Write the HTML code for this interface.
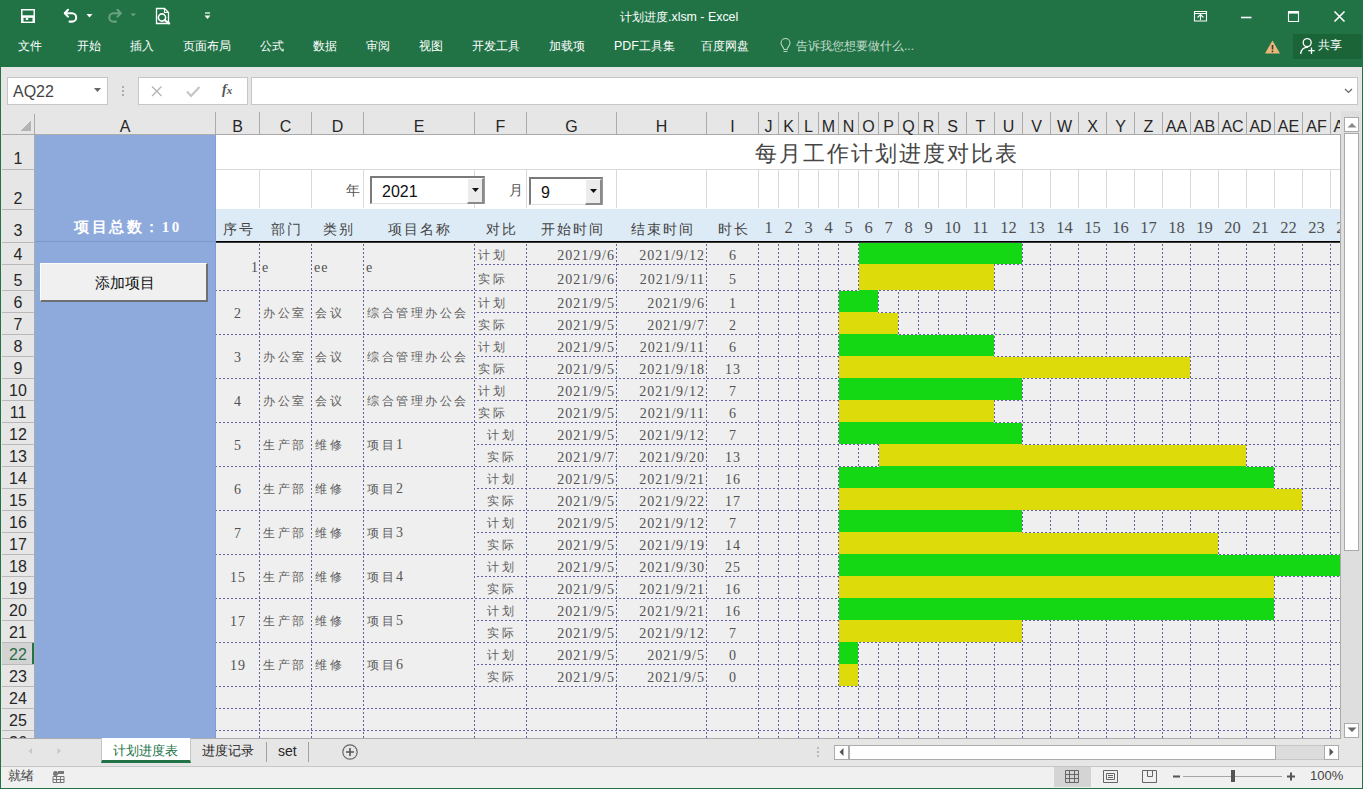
<!DOCTYPE html><html><head><meta charset="utf-8"><title>Excel</title><style>*{margin:0;padding:0;box-sizing:border-box}html,body{width:1363px;height:789px;overflow:hidden}body{position:relative;background:#e6e6e6;font-family:'Liberation Sans', sans-serif}.a{position:absolute;white-space:nowrap}.rt{color:#fff;font-size:12.4px;top:38px;line-height:16px}.ch{position:absolute;top:114px;height:20px;line-height:20px;text-align:center;font-size:16px;color:#262626;padding-top:3px}.rh{position:absolute;left:2px;width:32px;text-align:center;font-size:16px;color:#262626;line-height:18px}.t{position:absolute;white-space:nowrap;font-family:'Liberation Serif', serif;font-size:11.5px;color:#5e5e5e;line-height:16px;letter-spacing:2.5px}.hd{position:absolute;white-space:nowrap;font-family:'Liberation Serif', serif;font-size:14px;color:#444;line-height:18px;text-align:center}svg{position:absolute;left:0;top:0}.n{font-size:14px;letter-spacing:1px;color:#515151}.dg{font-size:16.5px;letter-spacing:0;color:#505050}</style></head><body><div class="a" style="left:0;top:0;width:1363px;height:67px;background:#217346"></div><svg width="1363" height="67" viewBox="0 0 1363 67"><path d="M21 9h14v14h-14z" fill="#fff"/><path d="M22.5 10.5h11v4.8h-11z" fill="#217346"/><path d="M23.5 17.8h9v3.8h-9z" fill="#217346"/><path d="M25.8 17.8h2.4v2.2h-2.4z" fill="#fff"/><path d="M68 9.8 L64.8 13.2 L68 16.6" fill="none" stroke="#fff" stroke-width="2.1" stroke-linecap="round" stroke-linejoin="round"/><path d="M65 13.2 H72 a4.2 4.2 0 0 1 0 8.4 H69.5" fill="none" stroke="#fff" stroke-width="2.1" stroke-linecap="round"/><path d="M86.5 14h6l-3 3.5z" fill="#fff"/><g opacity="0.33"><path d="M117.5 9.8 L120.7 13.2 L117.5 16.6" fill="none" stroke="#fff" stroke-width="2.1" stroke-linecap="round" stroke-linejoin="round"/><path d="M120.5 13.2 H113.5 a4.2 4.2 0 0 0 0 8.4 H116" fill="none" stroke="#fff" stroke-width="2.1" stroke-linecap="round"/><path d="M130.5 13.5h5.5l-2.75 3z" fill="#fff"/></g><path d="M156.5 8.5h8l4 4v11h-12z" fill="none" stroke="#fff" stroke-width="1.3"/><path d="M164.5 8.5v4h4" fill="none" stroke="#fff" stroke-width="1.1"/><circle cx="162" cy="17.5" r="3.6" fill="#217346" stroke="#fff" stroke-width="1.6"/><path d="M164.6 20.2l4.6 3.2" stroke="#fff" stroke-width="2.2" stroke-linecap="round"/><path d="M205 13h5" stroke="#fff" stroke-width="1.2"/><path d="M204.5 15.5h6l-3 3.5z" fill="#fff"/><path d="M1194.5 11.5h12v9.5h-12z" fill="none" stroke="#fff" stroke-width="1.1"/><path d="M1194.5 13.5h12" stroke="#fff" stroke-width="1"/><path d="M1197.5 17.5l3-3l3 3M1200.5 14.5v5.5" fill="none" stroke="#fff" stroke-width="1.1"/><path d="M1241 17.5h10.5" stroke="#fff" stroke-width="1.6"/><path d="M1288.5 11.5h10v10h-10z" fill="none" stroke="#fff" stroke-width="1.1"/><path d="M1288.5 12.6h10" stroke="#fff" stroke-width="2"/><path d="M1334.5 11.5l10 10M1344.5 11.5l-10 10" stroke="#fff" stroke-width="1.6"/><path d="M1272.5 40.5l7.5 13h-15z" fill="#e9b778"/><path d="M1272.5 45v4.5" stroke="#3a3a3a" stroke-width="1.6"/><circle cx="1272.5" cy="51.4" r="0.9" fill="#3a3a3a"/><rect x="1293" y="34" width="69" height="25" fill="#1a6438"/><circle cx="1307.2" cy="42.6" r="4" fill="none" stroke="#fff" stroke-width="1.3"/><path d="M1300.6 53.8c0.6-3.8 3.2-6.6 7.4-6.6" fill="none" stroke="#fff" stroke-width="1.3"/><path d="M1311.5 47.5v6.5M1308.3 50.7h6.4" stroke="#fff" stroke-width="1.3"/><path d="M783.5 51.5h4M784 49.5c0-2-3-3.5-3-6.5a4.5 4.5 0 0 1 9 0c0 3-3 4.5-3 6.5z" fill="none" stroke="#b9d6c3" stroke-width="1.1"/></svg><div class="a" style="left:620px;top:9px;font-size:12.4px;color:#fff;line-height:16px">计划进度.xlsm - Excel</div><div class="a rt" style="left:18px">文件</div><div class="a rt" style="left:77px">开始</div><div class="a rt" style="left:130px">插入</div><div class="a rt" style="left:183px">页面布局</div><div class="a rt" style="left:260px">公式</div><div class="a rt" style="left:313px">数据</div><div class="a rt" style="left:366px">审阅</div><div class="a rt" style="left:419px">视图</div><div class="a rt" style="left:472px">开发工具</div><div class="a rt" style="left:549px">加载项</div><div class="a rt" style="left:614px">PDF工具集</div><div class="a rt" style="left:701px">百度网盘</div><div class="a rt" style="left:796px;color:#c3dccb;font-size:12px">告诉我您想要做什么...</div><div class="a rt" style="left:1318px;top:37px">共享</div><div class="a" style="left:7px;top:77px;width:101px;height:28px;background:#fff;border:1px solid #c6c6c6"></div><div class="a" style="left:13px;top:83px;font-size:16px;color:#444;line-height:18px">AQ22</div><svg width="1363" height="120" viewBox="0 0 1363 120"><path d="M94 88h7l-3.5 4z" fill="#666"/><circle cx="123" cy="87" r="1" fill="#999"/><circle cx="123" cy="91" r="1" fill="#999"/><circle cx="123" cy="95" r="1" fill="#999"/></svg><div class="a" style="left:138px;top:77px;width:110px;height:28px;background:#fff;border:1px solid #c6c6c6"></div><div class="a" style="left:251px;top:77px;width:1107px;height:28px;background:#fff;border:1px solid #c6c6c6"></div><svg width="1363" height="120" viewBox="0 0 1363 120"><path d="M152 86.5l9.5 9.5M161.5 86.5l-9.5 9.5" stroke="#b4b4b4" stroke-width="1.3"/><path d="M187 91.5l4 4.5l8.5-9" fill="none" stroke="#c4c4c4" stroke-width="2"/><path d="M1345 89l3.5 3.5l3.5-3.5" fill="none" stroke="#666" stroke-width="1.2"/></svg><div class="a" style="left:222px;top:82px;font-family:'Liberation Serif', serif;font-style:italic;font-weight:bold;font-size:14px;color:#555;line-height:16px">f<span style="font-size:11px">x</span></div><svg width="1363" height="789" viewBox="0 0 1363 789" shape-rendering="crispEdges"><rect x="2" y="111" width="1338" height="23" fill="#e6e6e6"/><rect x="2" y="135" width="32" height="603" fill="#e6e6e6"/><rect x="35" y="135" width="180" height="603" fill="#8ea9db"/><rect x="216" y="135" width="1124" height="74" fill="#fff"/><rect x="216" y="209" width="1124" height="32" fill="#ddebf7"/><rect x="216" y="243" width="1124" height="495" fill="#efefef"/><path d="M2 134.5H1340" stroke="#ababab" stroke-width="1"/><path d="M34.5 114V738" stroke="#ababab" stroke-width="1"/><path d="M215.5 112V134" stroke="#ababab" stroke-width="1"/><path d="M259.5 112V134" stroke="#ababab" stroke-width="1"/><path d="M311.5 112V134" stroke="#ababab" stroke-width="1"/><path d="M363.5 112V134" stroke="#ababab" stroke-width="1"/><path d="M474.5 112V134" stroke="#ababab" stroke-width="1"/><path d="M526.5 112V134" stroke="#ababab" stroke-width="1"/><path d="M616.5 112V134" stroke="#ababab" stroke-width="1"/><path d="M706.5 112V134" stroke="#ababab" stroke-width="1"/><path d="M758.5 112V134" stroke="#ababab" stroke-width="1"/><path d="M778.5 112V134" stroke="#ababab" stroke-width="1"/><path d="M798.5 112V134" stroke="#ababab" stroke-width="1"/><path d="M818.5 112V134" stroke="#ababab" stroke-width="1"/><path d="M838.5 112V134" stroke="#ababab" stroke-width="1"/><path d="M858.5 112V134" stroke="#ababab" stroke-width="1"/><path d="M878.5 112V134" stroke="#ababab" stroke-width="1"/><path d="M898.5 112V134" stroke="#ababab" stroke-width="1"/><path d="M918.5 112V134" stroke="#ababab" stroke-width="1"/><path d="M938.5 112V134" stroke="#ababab" stroke-width="1"/><path d="M966.5 112V134" stroke="#ababab" stroke-width="1"/><path d="M994.5 112V134" stroke="#ababab" stroke-width="1"/><path d="M1022.5 112V134" stroke="#ababab" stroke-width="1"/><path d="M1050.5 112V134" stroke="#ababab" stroke-width="1"/><path d="M1078.5 112V134" stroke="#ababab" stroke-width="1"/><path d="M1106.5 112V134" stroke="#ababab" stroke-width="1"/><path d="M1134.5 112V134" stroke="#ababab" stroke-width="1"/><path d="M1162.5 112V134" stroke="#ababab" stroke-width="1"/><path d="M1190.5 112V134" stroke="#ababab" stroke-width="1"/><path d="M1218.5 112V134" stroke="#ababab" stroke-width="1"/><path d="M1246.5 112V134" stroke="#ababab" stroke-width="1"/><path d="M1274.5 112V134" stroke="#ababab" stroke-width="1"/><path d="M1302.5 112V134" stroke="#ababab" stroke-width="1"/><path d="M1330.5 112V134" stroke="#ababab" stroke-width="1"/><path d="M2 169.5H34" stroke="#b9b9b9" stroke-width="1"/><path d="M2 209.5H34" stroke="#b9b9b9" stroke-width="1"/><path d="M2 242.5H34" stroke="#b9b9b9" stroke-width="1"/><path d="M2 264.5H34" stroke="#b9b9b9" stroke-width="1"/><path d="M2 290.5H34" stroke="#b9b9b9" stroke-width="1"/><path d="M2 312.5H34" stroke="#b9b9b9" stroke-width="1"/><path d="M2 334.5H34" stroke="#b9b9b9" stroke-width="1"/><path d="M2 356.5H34" stroke="#b9b9b9" stroke-width="1"/><path d="M2 378.5H34" stroke="#b9b9b9" stroke-width="1"/><path d="M2 400.5H34" stroke="#b9b9b9" stroke-width="1"/><path d="M2 422.5H34" stroke="#b9b9b9" stroke-width="1"/><path d="M2 444.5H34" stroke="#b9b9b9" stroke-width="1"/><path d="M2 466.5H34" stroke="#b9b9b9" stroke-width="1"/><path d="M2 488.5H34" stroke="#b9b9b9" stroke-width="1"/><path d="M2 510.5H34" stroke="#b9b9b9" stroke-width="1"/><path d="M2 532.5H34" stroke="#b9b9b9" stroke-width="1"/><path d="M2 554.5H34" stroke="#b9b9b9" stroke-width="1"/><path d="M2 576.5H34" stroke="#b9b9b9" stroke-width="1"/><path d="M2 598.5H34" stroke="#b9b9b9" stroke-width="1"/><path d="M2 620.5H34" stroke="#b9b9b9" stroke-width="1"/><path d="M2 642.5H34" stroke="#b9b9b9" stroke-width="1"/><path d="M2 664.5H34" stroke="#b9b9b9" stroke-width="1"/><path d="M2 686.5H34" stroke="#b9b9b9" stroke-width="1"/><path d="M2 708.5H34" stroke="#b9b9b9" stroke-width="1"/><path d="M2 730.5H34" stroke="#b9b9b9" stroke-width="1"/><path d="M31 120V131H20z" fill="#b4b4b4"/><path d="M216 169.5H1340" stroke="#d9d9d9" stroke-width="1"/><path d="M259.5 170V208" stroke="#d9d9d9" stroke-width="1"/><path d="M311.5 170V208" stroke="#d9d9d9" stroke-width="1"/><path d="M363.5 170V208" stroke="#d9d9d9" stroke-width="1"/><path d="M474.5 170V208" stroke="#d9d9d9" stroke-width="1"/><path d="M526.5 170V208" stroke="#d9d9d9" stroke-width="1"/><path d="M616.5 170V208" stroke="#d9d9d9" stroke-width="1"/><path d="M706.5 170V208" stroke="#d9d9d9" stroke-width="1"/><path d="M758.5 170V208" stroke="#d9d9d9" stroke-width="1"/><path d="M778.5 170V208" stroke="#d9d9d9" stroke-width="1"/><path d="M798.5 170V208" stroke="#d9d9d9" stroke-width="1"/><path d="M818.5 170V208" stroke="#d9d9d9" stroke-width="1"/><path d="M838.5 170V208" stroke="#d9d9d9" stroke-width="1"/><path d="M858.5 170V208" stroke="#d9d9d9" stroke-width="1"/><path d="M878.5 170V208" stroke="#d9d9d9" stroke-width="1"/><path d="M898.5 170V208" stroke="#d9d9d9" stroke-width="1"/><path d="M918.5 170V208" stroke="#d9d9d9" stroke-width="1"/><path d="M938.5 170V208" stroke="#d9d9d9" stroke-width="1"/><path d="M966.5 170V208" stroke="#d9d9d9" stroke-width="1"/><path d="M994.5 170V208" stroke="#d9d9d9" stroke-width="1"/><path d="M1022.5 170V208" stroke="#d9d9d9" stroke-width="1"/><path d="M1050.5 170V208" stroke="#d9d9d9" stroke-width="1"/><path d="M1078.5 170V208" stroke="#d9d9d9" stroke-width="1"/><path d="M1106.5 170V208" stroke="#d9d9d9" stroke-width="1"/><path d="M1134.5 170V208" stroke="#d9d9d9" stroke-width="1"/><path d="M1162.5 170V208" stroke="#d9d9d9" stroke-width="1"/><path d="M1190.5 170V208" stroke="#d9d9d9" stroke-width="1"/><path d="M1218.5 170V208" stroke="#d9d9d9" stroke-width="1"/><path d="M1246.5 170V208" stroke="#d9d9d9" stroke-width="1"/><path d="M1274.5 170V208" stroke="#d9d9d9" stroke-width="1"/><path d="M1302.5 170V208" stroke="#d9d9d9" stroke-width="1"/><path d="M1330.5 170V208" stroke="#d9d9d9" stroke-width="1"/><rect x="216" y="241" width="1124" height="1" fill="#000"/><rect x="216" y="242" width="1124" height="1" fill="#3a3a3a"/><path d="M35 241.5H215" stroke="#7c97c9" stroke-width="1"/><path d="M474 264.5H1340" stroke="#62629e" stroke-width="1" stroke-dasharray="2 2" stroke-dashoffset="1"/><path d="M216 290.5H1340" stroke="#62629e" stroke-width="1" stroke-dasharray="2 2" stroke-dashoffset="1"/><path d="M474 312.5H1340" stroke="#62629e" stroke-width="1" stroke-dasharray="2 2" stroke-dashoffset="1"/><path d="M216 334.5H1340" stroke="#62629e" stroke-width="1" stroke-dasharray="2 2" stroke-dashoffset="1"/><path d="M474 356.5H1340" stroke="#62629e" stroke-width="1" stroke-dasharray="2 2" stroke-dashoffset="1"/><path d="M216 378.5H1340" stroke="#62629e" stroke-width="1" stroke-dasharray="2 2" stroke-dashoffset="1"/><path d="M474 400.5H1340" stroke="#62629e" stroke-width="1" stroke-dasharray="2 2" stroke-dashoffset="1"/><path d="M216 422.5H1340" stroke="#62629e" stroke-width="1" stroke-dasharray="2 2" stroke-dashoffset="1"/><path d="M474 444.5H1340" stroke="#62629e" stroke-width="1" stroke-dasharray="2 2" stroke-dashoffset="1"/><path d="M216 466.5H1340" stroke="#62629e" stroke-width="1" stroke-dasharray="2 2" stroke-dashoffset="1"/><path d="M474 488.5H1340" stroke="#62629e" stroke-width="1" stroke-dasharray="2 2" stroke-dashoffset="1"/><path d="M216 510.5H1340" stroke="#62629e" stroke-width="1" stroke-dasharray="2 2" stroke-dashoffset="1"/><path d="M474 532.5H1340" stroke="#62629e" stroke-width="1" stroke-dasharray="2 2" stroke-dashoffset="1"/><path d="M216 554.5H1340" stroke="#62629e" stroke-width="1" stroke-dasharray="2 2" stroke-dashoffset="1"/><path d="M474 576.5H1340" stroke="#62629e" stroke-width="1" stroke-dasharray="2 2" stroke-dashoffset="1"/><path d="M216 598.5H1340" stroke="#62629e" stroke-width="1" stroke-dasharray="2 2" stroke-dashoffset="1"/><path d="M474 620.5H1340" stroke="#62629e" stroke-width="1" stroke-dasharray="2 2" stroke-dashoffset="1"/><path d="M216 642.5H1340" stroke="#62629e" stroke-width="1" stroke-dasharray="2 2" stroke-dashoffset="1"/><path d="M474 664.5H1340" stroke="#62629e" stroke-width="1" stroke-dasharray="2 2" stroke-dashoffset="1"/><path d="M216 686.5H1340" stroke="#62629e" stroke-width="1" stroke-dasharray="2 2" stroke-dashoffset="1"/><path d="M216 708.5H1340" stroke="#62629e" stroke-width="1" stroke-dasharray="2 2" stroke-dashoffset="1"/><path d="M216 730.5H1340" stroke="#62629e" stroke-width="1" stroke-dasharray="2 2" stroke-dashoffset="1"/><path d="M259.5 243V738" stroke="#62629e" stroke-width="1" stroke-dasharray="2 2" stroke-dashoffset="3"/><path d="M311.5 243V738" stroke="#62629e" stroke-width="1" stroke-dasharray="2 2" stroke-dashoffset="3"/><path d="M363.5 243V738" stroke="#62629e" stroke-width="1" stroke-dasharray="2 2" stroke-dashoffset="3"/><path d="M474.5 243V738" stroke="#62629e" stroke-width="1" stroke-dasharray="2 2" stroke-dashoffset="3"/><path d="M526.5 243V738" stroke="#62629e" stroke-width="1" stroke-dasharray="2 2" stroke-dashoffset="3"/><path d="M616.5 243V738" stroke="#62629e" stroke-width="1" stroke-dasharray="2 2" stroke-dashoffset="3"/><path d="M706.5 243V738" stroke="#62629e" stroke-width="1" stroke-dasharray="2 2" stroke-dashoffset="3"/><path d="M758.5 243V738" stroke="#62629e" stroke-width="1" stroke-dasharray="2 2" stroke-dashoffset="3"/><path d="M778.5 243V738" stroke="#62629e" stroke-width="1" stroke-dasharray="2 2" stroke-dashoffset="3"/><path d="M798.5 243V738" stroke="#62629e" stroke-width="1" stroke-dasharray="2 2" stroke-dashoffset="3"/><path d="M818.5 243V738" stroke="#62629e" stroke-width="1" stroke-dasharray="2 2" stroke-dashoffset="3"/><path d="M838.5 243V738" stroke="#62629e" stroke-width="1" stroke-dasharray="2 2" stroke-dashoffset="3"/><path d="M858.5 243V738" stroke="#62629e" stroke-width="1" stroke-dasharray="2 2" stroke-dashoffset="3"/><path d="M878.5 243V738" stroke="#62629e" stroke-width="1" stroke-dasharray="2 2" stroke-dashoffset="3"/><path d="M898.5 243V738" stroke="#62629e" stroke-width="1" stroke-dasharray="2 2" stroke-dashoffset="3"/><path d="M918.5 243V738" stroke="#62629e" stroke-width="1" stroke-dasharray="2 2" stroke-dashoffset="3"/><path d="M938.5 243V738" stroke="#62629e" stroke-width="1" stroke-dasharray="2 2" stroke-dashoffset="3"/><path d="M966.5 243V738" stroke="#62629e" stroke-width="1" stroke-dasharray="2 2" stroke-dashoffset="3"/><path d="M994.5 243V738" stroke="#62629e" stroke-width="1" stroke-dasharray="2 2" stroke-dashoffset="3"/><path d="M1022.5 243V738" stroke="#62629e" stroke-width="1" stroke-dasharray="2 2" stroke-dashoffset="3"/><path d="M1050.5 243V738" stroke="#62629e" stroke-width="1" stroke-dasharray="2 2" stroke-dashoffset="3"/><path d="M1078.5 243V738" stroke="#62629e" stroke-width="1" stroke-dasharray="2 2" stroke-dashoffset="3"/><path d="M1106.5 243V738" stroke="#62629e" stroke-width="1" stroke-dasharray="2 2" stroke-dashoffset="3"/><path d="M1134.5 243V738" stroke="#62629e" stroke-width="1" stroke-dasharray="2 2" stroke-dashoffset="3"/><path d="M1162.5 243V738" stroke="#62629e" stroke-width="1" stroke-dasharray="2 2" stroke-dashoffset="3"/><path d="M1190.5 243V738" stroke="#62629e" stroke-width="1" stroke-dasharray="2 2" stroke-dashoffset="3"/><path d="M1218.5 243V738" stroke="#62629e" stroke-width="1" stroke-dasharray="2 2" stroke-dashoffset="3"/><path d="M1246.5 243V738" stroke="#62629e" stroke-width="1" stroke-dasharray="2 2" stroke-dashoffset="3"/><path d="M1274.5 243V738" stroke="#62629e" stroke-width="1" stroke-dasharray="2 2" stroke-dashoffset="3"/><path d="M1302.5 243V738" stroke="#62629e" stroke-width="1" stroke-dasharray="2 2" stroke-dashoffset="3"/><path d="M1330.5 243V738" stroke="#62629e" stroke-width="1" stroke-dasharray="2 2" stroke-dashoffset="3"/><path d="M1340.5 134V738" stroke="#ababab" stroke-width="1"/><path d="M2 738.5H1341" stroke="#ababab" stroke-width="1"/><path d="M215.5 135V738" stroke="#809cd0" stroke-width="1"/><rect x="859" y="243" width="163" height="21" fill="#14d814"/><rect x="859" y="264" width="135" height="1" fill="#dddc0a"/><rect x="859" y="265" width="135" height="25" fill="#dddc0a"/><rect x="859" y="290" width="19" height="1" fill="#14d814"/><rect x="839" y="291" width="39" height="21" fill="#14d814"/><rect x="839" y="312" width="39" height="1" fill="#dddc0a"/><rect x="839" y="313" width="59" height="21" fill="#dddc0a"/><rect x="839" y="334" width="59" height="1" fill="#14d814"/><rect x="839" y="335" width="155" height="21" fill="#14d814"/><rect x="839" y="356" width="155" height="1" fill="#dddc0a"/><rect x="839" y="357" width="351" height="21" fill="#dddc0a"/><rect x="839" y="378" width="183" height="1" fill="#14d814"/><rect x="839" y="379" width="183" height="21" fill="#14d814"/><rect x="839" y="400" width="155" height="1" fill="#dddc0a"/><rect x="839" y="401" width="155" height="21" fill="#dddc0a"/><rect x="839" y="422" width="155" height="1" fill="#14d814"/><rect x="839" y="423" width="183" height="21" fill="#14d814"/><rect x="879" y="444" width="143" height="1" fill="#dddc0a"/><rect x="879" y="445" width="367" height="21" fill="#dddc0a"/><rect x="879" y="466" width="367" height="1" fill="#14d814"/><rect x="839" y="467" width="435" height="21" fill="#14d814"/><rect x="839" y="488" width="435" height="1" fill="#dddc0a"/><rect x="839" y="489" width="463" height="21" fill="#dddc0a"/><rect x="839" y="510" width="183" height="1" fill="#14d814"/><rect x="839" y="511" width="183" height="21" fill="#14d814"/><rect x="839" y="532" width="183" height="1" fill="#dddc0a"/><rect x="839" y="533" width="379" height="21" fill="#dddc0a"/><rect x="839" y="554" width="379" height="1" fill="#14d814"/><rect x="839" y="555" width="501" height="21" fill="#14d814"/><rect x="839" y="576" width="435" height="1" fill="#dddc0a"/><rect x="839" y="577" width="435" height="21" fill="#dddc0a"/><rect x="839" y="598" width="435" height="1" fill="#14d814"/><rect x="839" y="599" width="435" height="21" fill="#14d814"/><rect x="839" y="620" width="183" height="1" fill="#dddc0a"/><rect x="839" y="621" width="183" height="21" fill="#dddc0a"/><rect x="839" y="642" width="19" height="1" fill="#14d814"/><rect x="839" y="643" width="19" height="21" fill="#14d814"/><rect x="839" y="664" width="19" height="1" fill="#dddc0a"/><rect x="839" y="665" width="19" height="21" fill="#dddc0a"/></svg><div class="ch" style="left:35px;width:180px">A</div><div class="ch" style="left:216px;width:43px">B</div><div class="ch" style="left:260px;width:51px">C</div><div class="ch" style="left:312px;width:51px">D</div><div class="ch" style="left:364px;width:110px">E</div><div class="ch" style="left:475px;width:51px">F</div><div class="ch" style="left:527px;width:89px">G</div><div class="ch" style="left:617px;width:89px">H</div><div class="ch" style="left:707px;width:51px">I</div><div class="ch" style="left:759px;width:19px">J</div><div class="ch" style="left:779px;width:19px">K</div><div class="ch" style="left:799px;width:19px">L</div><div class="ch" style="left:819px;width:19px">M</div><div class="ch" style="left:839px;width:19px">N</div><div class="ch" style="left:859px;width:19px">O</div><div class="ch" style="left:879px;width:19px">P</div><div class="ch" style="left:899px;width:19px">Q</div><div class="ch" style="left:919px;width:19px">R</div><div class="ch" style="left:939px;width:27px">S</div><div class="ch" style="left:967px;width:27px">T</div><div class="ch" style="left:995px;width:27px">U</div><div class="ch" style="left:1023px;width:27px">V</div><div class="ch" style="left:1051px;width:27px">W</div><div class="ch" style="left:1079px;width:27px">X</div><div class="ch" style="left:1107px;width:27px">Y</div><div class="ch" style="left:1135px;width:27px">Z</div><div class="ch" style="left:1163px;width:27px">AA</div><div class="ch" style="left:1191px;width:27px">AB</div><div class="ch" style="left:1219px;width:27px">AC</div><div class="ch" style="left:1247px;width:27px">AD</div><div class="ch" style="left:1275px;width:27px">AE</div><div class="ch" style="left:1303px;width:27px">AF</div><div class="ch" style="left:1331px;width:9px;overflow:hidden"><div style="width:28px">AG</div></div><div class="rh" style="top:150px">1</div><div class="rh" style="top:190px">2</div><div class="rh" style="top:222px">3</div><div class="rh" style="top:246px">4</div><div class="rh" style="top:272px">5</div><div class="rh" style="top:294px">6</div><div class="rh" style="top:316px">7</div><div class="rh" style="top:338px">8</div><div class="rh" style="top:360px">9</div><div class="rh" style="top:382px">10</div><div class="rh" style="top:404px">11</div><div class="rh" style="top:426px">12</div><div class="rh" style="top:448px">13</div><div class="rh" style="top:470px">14</div><div class="rh" style="top:492px">15</div><div class="rh" style="top:514px">16</div><div class="rh" style="top:536px">17</div><div class="rh" style="top:558px">18</div><div class="rh" style="top:580px">19</div><div class="rh" style="top:602px">20</div><div class="rh" style="top:624px">21</div><div class="a" style="left:2px;top:643px;width:32px;height:21px;background:#d3d3d3;border-right:2px solid #217346"></div><div class="rh" style="top:646px;color:#2d6b48">22</div><div class="rh" style="top:668px">23</div><div class="rh" style="top:690px">24</div><div class="rh" style="top:712px">25</div><div class="a" style="left:2px;top:731px;width:32px;height:7px;overflow:hidden"><div class="rh" style="left:0;top:3px">26</div></div><div class="t" style="left:755px;top:141px;font-size:22px;letter-spacing:2px;line-height:26px;color:#454545">每月工作计划进度对比表</div><div class="t" style="left:346px;top:183px;font-size:14px;color:#555">年</div><div class="t" style="left:509px;top:183px;font-size:13.5px;color:#555">月</div><div class="a" style="left:370px;top:176px;width:115px;height:28px;background:#fff;border-top:2px solid #7a7a7a;border-left:2px solid #7a7a7a;border-right:2px solid #9a9a9a;border-bottom:1px solid #e0e0e0"></div><div class="a" style="left:467px;top:178px;width:17px;height:26px;background:#ececec;border-right:2px solid #8a8a8a;border-bottom:2px solid #8a8a8a;border-left:1px solid #fff;border-top:1px solid #fff"></div><svg width="1363" height="789" viewBox="0 0 1363 789" style="position:absolute;left:0;top:0"><path d="M472.0 188.0h7l-3.5 4z" fill="#111"/></svg><div class="a" style="left:382px;top:183px;font-size:16px;color:#111;line-height:18px">2021</div><div class="a" style="left:529px;top:177px;width:74px;height:28px;background:#fff;border-top:2px solid #7a7a7a;border-left:2px solid #7a7a7a;border-right:2px solid #9a9a9a;border-bottom:1px solid #e0e0e0"></div><div class="a" style="left:585px;top:179px;width:17px;height:26px;background:#ececec;border-right:2px solid #8a8a8a;border-bottom:2px solid #8a8a8a;border-left:1px solid #fff;border-top:1px solid #fff"></div><svg width="1363" height="789" viewBox="0 0 1363 789" style="position:absolute;left:0;top:0"><path d="M590.0 189.0h7l-3.5 4z" fill="#111"/></svg><div class="a" style="left:541px;top:184px;font-size:16px;color:#111;line-height:18px">9</div><div class="hd" style="left:216px;top:221px;width:43px;letter-spacing:2px;text-indent:2px">序号</div><div class="hd" style="left:260px;top:221px;width:51px;letter-spacing:2px;text-indent:2px">部门</div><div class="hd" style="left:312px;top:221px;width:51px;letter-spacing:2px;text-indent:2px">类别</div><div class="hd" style="left:364px;top:221px;width:110px;letter-spacing:2px;text-indent:2px">项目名称</div><div class="hd" style="left:475px;top:221px;width:51px;letter-spacing:2px;text-indent:2px">对比</div><div class="hd" style="left:527px;top:221px;width:89px;letter-spacing:2px;text-indent:2px">开始时间</div><div class="hd" style="left:617px;top:221px;width:89px;letter-spacing:2px;text-indent:2px">结束时间</div><div class="hd" style="left:707px;top:221px;width:51px;letter-spacing:2px;text-indent:2px">时长</div><div class="hd dg" style="left:759px;top:218.5px;width:19px">1</div><div class="hd dg" style="left:779px;top:218.5px;width:19px">2</div><div class="hd dg" style="left:799px;top:218.5px;width:19px">3</div><div class="hd dg" style="left:819px;top:218.5px;width:19px">4</div><div class="hd dg" style="left:839px;top:218.5px;width:19px">5</div><div class="hd dg" style="left:859px;top:218.5px;width:19px">6</div><div class="hd dg" style="left:879px;top:218.5px;width:19px">7</div><div class="hd dg" style="left:899px;top:218.5px;width:19px">8</div><div class="hd dg" style="left:919px;top:218.5px;width:19px">9</div><div class="hd dg" style="left:939px;top:218.5px;width:27px">10</div><div class="hd dg" style="left:967px;top:218.5px;width:27px">11</div><div class="hd dg" style="left:995px;top:218.5px;width:27px">12</div><div class="hd dg" style="left:1023px;top:218.5px;width:27px">13</div><div class="hd dg" style="left:1051px;top:218.5px;width:27px">14</div><div class="hd dg" style="left:1079px;top:218.5px;width:27px">15</div><div class="hd dg" style="left:1107px;top:218.5px;width:27px">16</div><div class="hd dg" style="left:1135px;top:218.5px;width:27px">17</div><div class="hd dg" style="left:1163px;top:218.5px;width:27px">18</div><div class="hd dg" style="left:1191px;top:218.5px;width:27px">19</div><div class="hd dg" style="left:1219px;top:218.5px;width:27px">20</div><div class="hd dg" style="left:1247px;top:218.5px;width:27px">21</div><div class="hd dg" style="left:1275px;top:218.5px;width:27px">22</div><div class="hd dg" style="left:1303px;top:218.5px;width:27px">23</div><div class="hd dg" style="left:1331px;top:218.5px;width:9px;overflow:hidden"><div style="width:27px">24</div></div><div class="a" style="left:38px;top:217.5px;width:180px;text-align:center;font-family:'Liberation Serif', serif;font-weight:bold;font-size:15px;letter-spacing:2.5px;color:#fff;line-height:18px">项目总数：10</div><div class="a" style="left:40px;top:263px;width:168px;height:39px;background:#f0f0f0;border-top:1px solid #fff;border-left:1px solid #fff;border-right:2px solid #6f6f6f;border-bottom:2px solid #6f6f6f"></div><div class="a" style="left:41px;top:274px;width:168px;text-align:center;font-size:15px;color:#111;line-height:18px">添加项目</div><div class="t n" style="left:216px;top:259.5px;width:43px;text-align:right;padding-right:0px">1</div><div class="t n" style="left:262px;top:259.5px">e</div><div class="t n" style="left:314px;top:259.5px">ee</div><div class="t n" style="left:366px;top:259.5px">e</div><div class="t" style="left:478px;top:246.5px">计划</div><div class="t n" style="left:527px;top:247.5px;width:89px;text-align:right;padding-right:1px">2021/9/6</div><div class="t n" style="left:617px;top:247.5px;width:89px;text-align:right;padding-right:1px">2021/9/12</div><div class="t n" style="left:707px;top:247.5px;width:51px;text-align:center;text-indent:1px">6</div><div class="t" style="left:478px;top:270.5px">实际</div><div class="t n" style="left:527px;top:271.5px;width:89px;text-align:right;padding-right:1px">2021/9/6</div><div class="t n" style="left:617px;top:271.5px;width:89px;text-align:right;padding-right:1px">2021/9/11</div><div class="t n" style="left:707px;top:271.5px;width:51px;text-align:center;text-indent:1px">5</div><div class="t n" style="left:216px;top:305.5px;width:43px;text-align:center;text-indent:1px">2</div><div class="t" style="left:263px;top:304.5px">办公室</div><div class="t" style="left:315px;top:304.5px">会议</div><div class="t" style="left:367px;top:304.5px">综合管理办公会</div><div class="t" style="left:478px;top:294.5px">计划</div><div class="t n" style="left:527px;top:295.5px;width:89px;text-align:right;padding-right:1px">2021/9/5</div><div class="t n" style="left:617px;top:295.5px;width:89px;text-align:right;padding-right:1px">2021/9/6</div><div class="t n" style="left:707px;top:295.5px;width:51px;text-align:center;text-indent:1px">1</div><div class="t" style="left:478px;top:316.5px">实际</div><div class="t n" style="left:527px;top:317.5px;width:89px;text-align:right;padding-right:1px">2021/9/5</div><div class="t n" style="left:617px;top:317.5px;width:89px;text-align:right;padding-right:1px">2021/9/7</div><div class="t n" style="left:707px;top:317.5px;width:51px;text-align:center;text-indent:1px">2</div><div class="t n" style="left:216px;top:349.5px;width:43px;text-align:center;text-indent:1px">3</div><div class="t" style="left:263px;top:348.5px">办公室</div><div class="t" style="left:315px;top:348.5px">会议</div><div class="t" style="left:367px;top:348.5px">综合管理办公会</div><div class="t" style="left:478px;top:338.5px">计划</div><div class="t n" style="left:527px;top:339.5px;width:89px;text-align:right;padding-right:1px">2021/9/5</div><div class="t n" style="left:617px;top:339.5px;width:89px;text-align:right;padding-right:1px">2021/9/11</div><div class="t n" style="left:707px;top:339.5px;width:51px;text-align:center;text-indent:1px">6</div><div class="t" style="left:478px;top:360.5px">实际</div><div class="t n" style="left:527px;top:361.5px;width:89px;text-align:right;padding-right:1px">2021/9/5</div><div class="t n" style="left:617px;top:361.5px;width:89px;text-align:right;padding-right:1px">2021/9/18</div><div class="t n" style="left:707px;top:361.5px;width:51px;text-align:center;text-indent:1px">13</div><div class="t n" style="left:216px;top:393.5px;width:43px;text-align:center;text-indent:1px">4</div><div class="t" style="left:263px;top:392.5px">办公室</div><div class="t" style="left:315px;top:392.5px">会议</div><div class="t" style="left:367px;top:392.5px">综合管理办公会</div><div class="t" style="left:478px;top:382.5px">计划</div><div class="t n" style="left:527px;top:383.5px;width:89px;text-align:right;padding-right:1px">2021/9/5</div><div class="t n" style="left:617px;top:383.5px;width:89px;text-align:right;padding-right:1px">2021/9/12</div><div class="t n" style="left:707px;top:383.5px;width:51px;text-align:center;text-indent:1px">7</div><div class="t" style="left:478px;top:404.5px">实际</div><div class="t n" style="left:527px;top:405.5px;width:89px;text-align:right;padding-right:1px">2021/9/5</div><div class="t n" style="left:617px;top:405.5px;width:89px;text-align:right;padding-right:1px">2021/9/11</div><div class="t n" style="left:707px;top:405.5px;width:51px;text-align:center;text-indent:1px">6</div><div class="t n" style="left:216px;top:437.5px;width:43px;text-align:center;text-indent:1px">5</div><div class="t" style="left:263px;top:436.5px">生产部</div><div class="t" style="left:315px;top:436.5px">维修</div><div class="t" style="left:367px;top:436.5px">项目<span style="font-size:14px;letter-spacing:0;color:#555">1</span></div><div class="t" style="left:475px;top:426.5px;width:51px;text-align:center;text-indent:2px">计划</div><div class="t n" style="left:527px;top:427.5px;width:89px;text-align:right;padding-right:1px">2021/9/5</div><div class="t n" style="left:617px;top:427.5px;width:89px;text-align:right;padding-right:1px">2021/9/12</div><div class="t n" style="left:707px;top:427.5px;width:51px;text-align:center;text-indent:1px">7</div><div class="t" style="left:475px;top:448.5px;width:51px;text-align:center;text-indent:2px">实际</div><div class="t n" style="left:527px;top:449.5px;width:89px;text-align:right;padding-right:1px">2021/9/7</div><div class="t n" style="left:617px;top:449.5px;width:89px;text-align:right;padding-right:1px">2021/9/20</div><div class="t n" style="left:707px;top:449.5px;width:51px;text-align:center;text-indent:1px">13</div><div class="t n" style="left:216px;top:481.5px;width:43px;text-align:center;text-indent:1px">6</div><div class="t" style="left:263px;top:480.5px">生产部</div><div class="t" style="left:315px;top:480.5px">维修</div><div class="t" style="left:367px;top:480.5px">项目<span style="font-size:14px;letter-spacing:0;color:#555">2</span></div><div class="t" style="left:475px;top:470.5px;width:51px;text-align:center;text-indent:2px">计划</div><div class="t n" style="left:527px;top:471.5px;width:89px;text-align:right;padding-right:1px">2021/9/5</div><div class="t n" style="left:617px;top:471.5px;width:89px;text-align:right;padding-right:1px">2021/9/21</div><div class="t n" style="left:707px;top:471.5px;width:51px;text-align:center;text-indent:1px">16</div><div class="t" style="left:475px;top:492.5px;width:51px;text-align:center;text-indent:2px">实际</div><div class="t n" style="left:527px;top:493.5px;width:89px;text-align:right;padding-right:1px">2021/9/5</div><div class="t n" style="left:617px;top:493.5px;width:89px;text-align:right;padding-right:1px">2021/9/22</div><div class="t n" style="left:707px;top:493.5px;width:51px;text-align:center;text-indent:1px">17</div><div class="t n" style="left:216px;top:525.5px;width:43px;text-align:center;text-indent:1px">7</div><div class="t" style="left:263px;top:524.5px">生产部</div><div class="t" style="left:315px;top:524.5px">维修</div><div class="t" style="left:367px;top:524.5px">项目<span style="font-size:14px;letter-spacing:0;color:#555">3</span></div><div class="t" style="left:475px;top:514.5px;width:51px;text-align:center;text-indent:2px">计划</div><div class="t n" style="left:527px;top:515.5px;width:89px;text-align:right;padding-right:1px">2021/9/5</div><div class="t n" style="left:617px;top:515.5px;width:89px;text-align:right;padding-right:1px">2021/9/12</div><div class="t n" style="left:707px;top:515.5px;width:51px;text-align:center;text-indent:1px">7</div><div class="t" style="left:475px;top:536.5px;width:51px;text-align:center;text-indent:2px">实际</div><div class="t n" style="left:527px;top:537.5px;width:89px;text-align:right;padding-right:1px">2021/9/5</div><div class="t n" style="left:617px;top:537.5px;width:89px;text-align:right;padding-right:1px">2021/9/19</div><div class="t n" style="left:707px;top:537.5px;width:51px;text-align:center;text-indent:1px">14</div><div class="t n" style="left:216px;top:569.5px;width:43px;text-align:center;text-indent:1px">15</div><div class="t" style="left:263px;top:568.5px">生产部</div><div class="t" style="left:315px;top:568.5px">维修</div><div class="t" style="left:367px;top:568.5px">项目<span style="font-size:14px;letter-spacing:0;color:#555">4</span></div><div class="t" style="left:475px;top:558.5px;width:51px;text-align:center;text-indent:2px">计划</div><div class="t n" style="left:527px;top:559.5px;width:89px;text-align:right;padding-right:1px">2021/9/5</div><div class="t n" style="left:617px;top:559.5px;width:89px;text-align:right;padding-right:1px">2021/9/30</div><div class="t n" style="left:707px;top:559.5px;width:51px;text-align:center;text-indent:1px">25</div><div class="t" style="left:475px;top:580.5px;width:51px;text-align:center;text-indent:2px">实际</div><div class="t n" style="left:527px;top:581.5px;width:89px;text-align:right;padding-right:1px">2021/9/5</div><div class="t n" style="left:617px;top:581.5px;width:89px;text-align:right;padding-right:1px">2021/9/21</div><div class="t n" style="left:707px;top:581.5px;width:51px;text-align:center;text-indent:1px">16</div><div class="t n" style="left:216px;top:613.5px;width:43px;text-align:center;text-indent:1px">17</div><div class="t" style="left:263px;top:612.5px">生产部</div><div class="t" style="left:315px;top:612.5px">维修</div><div class="t" style="left:367px;top:612.5px">项目<span style="font-size:14px;letter-spacing:0;color:#555">5</span></div><div class="t" style="left:475px;top:602.5px;width:51px;text-align:center;text-indent:2px">计划</div><div class="t n" style="left:527px;top:603.5px;width:89px;text-align:right;padding-right:1px">2021/9/5</div><div class="t n" style="left:617px;top:603.5px;width:89px;text-align:right;padding-right:1px">2021/9/21</div><div class="t n" style="left:707px;top:603.5px;width:51px;text-align:center;text-indent:1px">16</div><div class="t" style="left:475px;top:624.5px;width:51px;text-align:center;text-indent:2px">实际</div><div class="t n" style="left:527px;top:625.5px;width:89px;text-align:right;padding-right:1px">2021/9/5</div><div class="t n" style="left:617px;top:625.5px;width:89px;text-align:right;padding-right:1px">2021/9/12</div><div class="t n" style="left:707px;top:625.5px;width:51px;text-align:center;text-indent:1px">7</div><div class="t n" style="left:216px;top:657.5px;width:43px;text-align:center;text-indent:1px">19</div><div class="t" style="left:263px;top:656.5px">生产部</div><div class="t" style="left:315px;top:656.5px">维修</div><div class="t" style="left:367px;top:656.5px">项目<span style="font-size:14px;letter-spacing:0;color:#555">6</span></div><div class="t" style="left:475px;top:646.5px;width:51px;text-align:center;text-indent:2px">计划</div><div class="t n" style="left:527px;top:647.5px;width:89px;text-align:right;padding-right:1px">2021/9/5</div><div class="t n" style="left:617px;top:647.5px;width:89px;text-align:right;padding-right:1px">2021/9/5</div><div class="t n" style="left:707px;top:647.5px;width:51px;text-align:center;text-indent:1px">0</div><div class="t" style="left:475px;top:668.5px;width:51px;text-align:center;text-indent:2px">实际</div><div class="t n" style="left:527px;top:669.5px;width:89px;text-align:right;padding-right:1px">2021/9/5</div><div class="t n" style="left:617px;top:669.5px;width:89px;text-align:right;padding-right:1px">2021/9/5</div><div class="t n" style="left:707px;top:669.5px;width:51px;text-align:center;text-indent:1px">0</div><div class="a" style="left:1341px;top:111px;width:20px;height:627px;background:#dedede"></div><div class="a" style="left:1344px;top:117px;width:15px;height:15px;background:#fff;border:1px solid #ababab"></div><div class="a" style="left:1344px;top:133px;width:15px;height:418px;background:#fff;border:1px solid #ababab"></div><div class="a" style="left:1344px;top:723px;width:15px;height:15px;background:#fff;border:1px solid #ababab"></div><svg width="1363" height="789" viewBox="0 0 1363 789"><path d="M1347.5 127.5h9l-4.5-4.5z" fill="#8a8a8a"/><path d="M1347.5 727.5h9l-4.5 4.5z" fill="#666"/></svg><div class="a" style="left:1px;top:739px;width:1361px;height:28px;background:#e6e6e6;border-bottom:1px solid #c6c6c6"></div><div class="a" style="left:101px;top:738px;width:90px;height:25px;background:#fff;border-left:1px solid #c6c6c6;border-right:1px solid #c6c6c6;border-bottom:3px solid #217346"></div><div class="a" style="left:113px;top:743px;font-size:13px;color:#217346;line-height:16px">计划进度表</div><div class="a" style="left:202px;top:743px;font-size:13px;color:#262626;line-height:16px">进度记录</div><div class="a" style="left:266px;top:742px;width:1px;height:20px;background:#a0a0a0"></div><div class="a" style="left:278px;top:742px;font-size:14px;color:#262626;line-height:18px">set</div><div class="a" style="left:308px;top:742px;width:1px;height:20px;background:#a0a0a0"></div><svg width="1363" height="789" viewBox="0 0 1363 789"><circle cx="350" cy="752" r="7.2" fill="none" stroke="#666" stroke-width="1.2"/><path d="M346 752h8M350 748v8" stroke="#555" stroke-width="1.6"/><path d="M32 748v6l-3.5-3z" fill="#c8c8c8"/><path d="M57.5 748v6l3.5-3z" fill="#c8c8c8"/><circle cx="818" cy="748" r="1" fill="#aaa"/><circle cx="818" cy="752" r="1" fill="#aaa"/><circle cx="818" cy="756" r="1" fill="#aaa"/></svg><div class="a" style="left:834px;top:745px;width:505px;height:15px;background:#dcdcdc;border:1px solid #c6c6c6"></div><div class="a" style="left:834px;top:745px;width:15px;height:15px;background:#fff;border:1px solid #ababab"></div><div class="a" style="left:849px;top:745px;width:427px;height:15px;background:#fff;border:1px solid #ababab"></div><div class="a" style="left:1324px;top:745px;width:15px;height:15px;background:#fff;border:1px solid #ababab"></div><svg width="1363" height="789" viewBox="0 0 1363 789"><path d="M843.5 748v8l-4-4z" fill="#555"/><path d="M1329.5 748v8l4-4z" fill="#555"/></svg><div class="a" style="left:1px;top:767px;width:1361px;height:21px;background:#f0f0f0"></div><div class="a" style="left:8px;top:768px;font-size:13px;color:#444;line-height:16px">就绪</div><svg width="1363" height="789" viewBox="0 0 1363 789"><circle cx="55.5" cy="773.5" r="2.5" fill="#777"/><path d="M58 771h6v3h-6z" fill="#777"/><path d="M53 776.5h11v6h-11z" fill="none" stroke="#777" stroke-width="1"/><path d="M53 779.5h11M56.5 776v7M60.5 776v7" stroke="#777" stroke-width="1"/><rect x="1054" y="767" width="37" height="20" fill="#d4d4d4"/><path d="M1065.5 770.5h13v12h-13zM1065.5 774.5h13M1065.5 778.5h13M1069.5 770.5v12M1074.5 770.5v12" fill="none" stroke="#666" stroke-width="1"/><path d="M1103.5 770.5h14v12h-14z" fill="none" stroke="#666" stroke-width="1"/><path d="M1106.5 773.5h8v6h-8z" fill="none" stroke="#666" stroke-width="1"/><path d="M1108 775.5h5M1108 777.5h5" stroke="#666" stroke-width="1"/><path d="M1142.5 770.5h14v12h-14z" fill="none" stroke="#666" stroke-width="1"/><path d="M1147.5 770.5v6h5v-6" fill="none" stroke="#666" stroke-width="1"/><path d="M1173 776.5h7" stroke="#555" stroke-width="2"/><path d="M1183 776.5h99" stroke="#a6a6a6" stroke-width="1"/><rect x="1231" y="770" width="4" height="12" fill="#555"/><path d="M1287 776.5h8M1291 772.5v8" stroke="#555" stroke-width="2"/></svg><div class="a" style="left:1310px;top:768px;font-size:13px;color:#444;line-height:16px">100%</div><div class="a" style="left:0;top:0;width:1px;height:789px;background:#217346"></div><div class="a" style="left:1362px;top:0;width:1px;height:789px;background:#217346"></div><div class="a" style="left:0;top:788px;width:1363px;height:1px;background:#217346"></div></body></html>
